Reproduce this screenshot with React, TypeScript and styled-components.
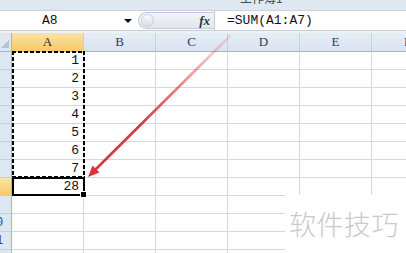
import styled, { createGlobalStyle, css } from "styled-components";

const columns = ["A", "B", "C", "D", "E", "F"];
const values = [1, 2, 3, 4, 5, 6, 7, 28];
const ROWS = 12;

const GlobalStyle = createGlobalStyle`
  html, body {
    margin: 0;
    padding: 0;
    background: #ffffff;
    overflow: hidden;
  }
  body {
    font-family: "Liberation Sans", Arial, sans-serif;
  }
`;

function App() {
  return (
    <Page>
      <GlobalStyle />
      <TitleStrip>
        <TitleText>工作簿1</TitleText>
      </TitleStrip>
      <FormulaBar>
        <NameBox>
          <NameText>A8</NameText>
          <DropArrow />
        </NameBox>
        <FxPill>
          <PillKnob />
          <Fx>fx</Fx>
        </FxPill>
        <FormulaInput>=SUM(A1:A7)</FormulaInput>
      </FormulaBar>
      <Spacer />
      <Sheet>
        <Corner>
          <CornerMark />
        </Corner>
        {columns.map((c, i) => (
          <ColHead key={c} $col={i + 2} $active={i === 0}>
            {c}
          </ColHead>
        ))}
        {Array.from({ length: ROWS }).map((_, r) => (
          <Row key={r}>
            <RowHead $row={r + 2} $active={r === 7}>
              <RowNum>{r + 1}</RowNum>
            </RowHead>
            {columns.map((c, i) => (
              <Cell key={c} $row={r + 2} $col={i + 2}>
                {i === 0 && values[r] !== undefined ? values[r] : ""}
              </Cell>
            ))}
          </Row>
        ))}
        <CopyRange />
        <ActiveCell>
          <FillHandle />
        </ActiveCell>
      </Sheet>
      <Arrow width="406" height="253" viewBox="0 0 406 253">
        <defs>
          <linearGradient id="fade" gradientUnits="userSpaceOnUse" x1="230" y1="36" x2="140" y2="126">
            <stop offset="0" stopColor="#e8353a" stopOpacity="0.12" />
            <stop offset="1" stopColor="#e0323a" stopOpacity="1" />
          </linearGradient>
        </defs>
        <line x1="230" y1="36" x2="95" y2="170" stroke="url(#fade)" strokeWidth="2.6" strokeLinecap="round" />
        <polygon points="88,177 99.5,172.5 92.5,165.5" fill="#e0323a" />
      </Arrow>
      <Watermark>软件技巧</Watermark>
    </Page>
  );
}

const Page = styled.div`
  position: relative;
  width: 406px;
  height: 253px;
  overflow: hidden;
  background: #ffffff;
`;

const TitleStrip = styled.div`
  height: 10px;
  background: #dfe7f0;
  border-bottom: 1px solid #c4d2e1;
  display: flex;
  padding-left: 240px;
  overflow: hidden;
`;

const TitleText = styled.span`
  margin-top: -10px;
  font-family: "Noto Sans CJK SC", sans-serif;
  font-size: 12px;
  line-height: 16px;
  color: #3b4a5c;
`;

const FormulaBar = styled.div`
  height: 19px;
  display: flex;
  background: #ffffff;
  border-bottom: 1px solid #c2cedb;
`;

const NameBox = styled.div`
  width: 136px;
  display: flex;
  align-items: center;
`;

const NameText = styled.span`
  padding-left: 42px;
  font-family: "Liberation Mono", monospace;
  font-size: 13px;
  color: #111;
`;

const DropArrow = styled.span`
  margin-left: auto;
  margin-right: 4px;
  width: 0;
  height: 0;
  border-left: 4px solid transparent;
  border-right: 4px solid transparent;
  border-top: 4px solid #111;
`;

const FxPill = styled.div`
  margin-left: 2px;
  width: 76px;
  margin-top: 1px;
  height: 17px;
  display: flex;
  align-items: center;
  background: linear-gradient(#f1f3f6, #e2e7ed);
  border: 1px solid #c3ccd6;
  border-right: none;
  border-radius: 9px 0 0 9px;
  box-sizing: border-box;
`;

const PillKnob = styled.span`
  margin-left: 2px;
  width: 13px;
  height: 13px;
  border-radius: 50%;
  background: linear-gradient(#fafbfc, #d9dee5);
  border: 1px solid #c8d0d9;
  box-sizing: border-box;
`;

const Fx = styled.span`
  margin-left: auto;
  margin-right: 4px;
  font-family: "Liberation Serif", serif;
  font-style: italic;
  font-weight: bold;
  font-size: 13px;
  color: #2a3340;
`;

const FormulaInput = styled.div`
  flex: 1;
  display: flex;
  align-items: center;
  padding-left: 12px;
  border-left: 1px solid #c3ccd6;
  font-family: "Liberation Mono", monospace;
  font-size: 13px;
  color: #111;
`;

const Spacer = styled.div`
  height: 2px;
  background: #eef2f7;
`;

const Sheet = styled.div`
  display: grid;
  grid-template-columns: 12px repeat(6, 72px);
  grid-template-rows: 19px repeat(${ROWS}, 18px);
`;

const Row = styled.div`
  display: contents;
`;

const activeHead = css`
  background: linear-gradient(#fbe3a6, #f5c967);
  color: #2b2a1e;
`;

const Corner = styled.div`
  grid-column: 1;
  grid-row: 1;
  background: #dfe7f1;
  border-right: 1px solid #9eb6ce;
  border-bottom: 1px solid #9eb6ce;
  box-sizing: border-box;
  display: flex;
  align-items: flex-end;
  justify-content: flex-end;
  padding: 0 2px 3px 0;
`;

const CornerMark = styled.span`
  width: 0;
  height: 0;
  border-left: 8px solid transparent;
  border-bottom: 8px solid #b3c1d1;
`;

const ColHead = styled.div<{ $col: number; $active?: boolean }>`
  grid-column: ${(p) => p.$col};
  grid-row: 1;
  box-sizing: border-box;
  background: linear-gradient(#e6edf6, #d9e3f0);
  border-right: 1px solid #c3d1e1;
  border-bottom: 1px solid #9eb6ce;
  display: flex;
  align-items: center;
  justify-content: center;
  font-family: "Liberation Serif", serif;
  font-size: 13px;
  color: #27415f;
  ${(p) => p.$active && activeHead}
`;

const RowHead = styled.div<{ $row: number; $active?: boolean }>`
  grid-column: 1;
  grid-row: ${(p) => p.$row};
  box-sizing: border-box;
  background: #dde7f2;
  border-right: 1px solid #9eb6ce;
  border-bottom: 1px solid #c3d1e1;
  overflow: hidden;
  display: flex;
  align-items: center;
  font-family: "Liberation Mono", monospace;
  font-size: 12px;
  color: #27415f;
  ${(p) => p.$active && activeHead}
`;

const RowNum = styled.span`
  flex: none;
  width: 26px;
  margin-left: -17px;
  text-align: center;
`;

const Cell = styled.div<{ $row: number; $col: number }>`
  grid-column: ${(p) => p.$col};
  grid-row: ${(p) => p.$row};
  box-sizing: border-box;
  border-right: 1px solid #d0d7e5;
  border-bottom: 1px solid #d0d7e5;
  display: flex;
  align-items: center;
  justify-content: flex-end;
  padding-right: 4px;
  font-family: "Liberation Mono", monospace;
  font-size: 13px;
  color: #111;
`;

const dash = "#000 0 4px, transparent 4px 6px";

const CopyRange = styled.div`
  grid-column: 2;
  grid-row: 2 / 9;
  margin: -1px -1px 0 0;
  pointer-events: none;
  background-image:
    repeating-linear-gradient(90deg, ${dash}),
    repeating-linear-gradient(90deg, ${dash}),
    repeating-linear-gradient(180deg, ${dash}),
    repeating-linear-gradient(180deg, ${dash});
  background-size: 100% 2px, 100% 2px, 2px 100%, 2px 100%;
  background-position: 0 0, 0 100%, 0 0, 100% 0;
  background-repeat: no-repeat;
`;

const ActiveCell = styled.div`
  grid-column: 2;
  grid-row: 9;
  margin: -1px -1px 0 0;
  border: 2px solid #000;
  position: relative;
  pointer-events: none;
`;

const FillHandle = styled.span`
  position: absolute;
  right: -4px;
  bottom: -4px;
  width: 5px;
  height: 5px;
  background: #000;
  border: 1px solid #fff;
`;

const Arrow = styled.svg`
  position: absolute;
  left: 0;
  top: 0;
  pointer-events: none;
`;

const Watermark = styled.div`
  position: absolute;
  left: 285px;
  top: 195px;
  right: 0;
  bottom: 0;
  background: #ffffff;
  padding: 14px 0 0 4px;
  box-sizing: border-box;
  font-family: "Noto Sans CJK SC", sans-serif;
  font-weight: 300;
  font-size: 27px;
  line-height: 30px;
  letter-spacing: 0.5px;
  color: #c9c9c9;
  white-space: nowrap;
`;

export default App;
